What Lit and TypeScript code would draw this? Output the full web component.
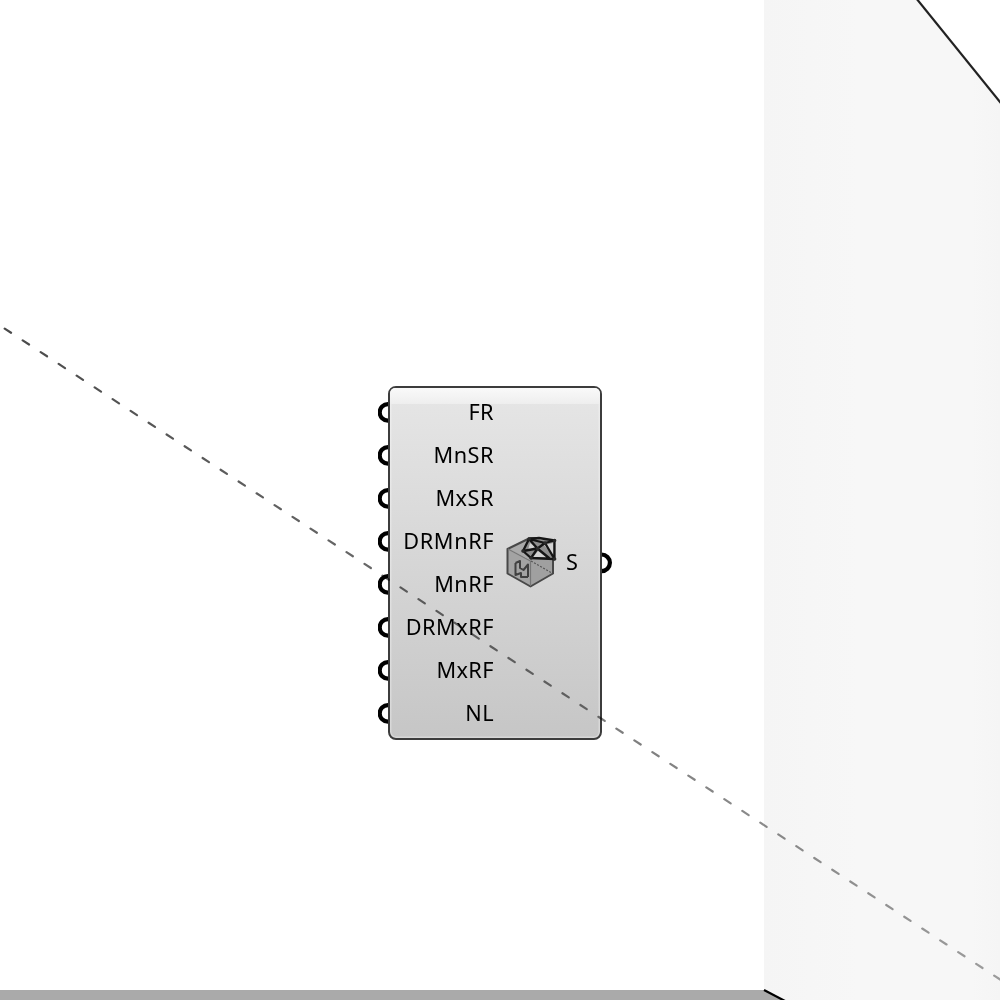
import { LitElement, html, css, svg } from "lit";
import { customElement } from "lit/decorators.js";

interface Port {
  label: string;
  spacing: number;
}

const INPUTS: Port[] = [
  { label: "FR", spacing: 0.3 },
  { label: "MnSR", spacing: 0.5 },
  { label: "MxSR", spacing: 0.5 },
  { label: "DRMnRF", spacing: 0.6 },
  { label: "MnRF", spacing: 0.5 },
  { label: "DRMxRF", spacing: 0.5 },
  { label: "MxRF", spacing: 0.4 },
  { label: "NL", spacing: 0.3 },
];

/** Mesh edges drawn over the top corner of the cube. */
const MESH = svg`
  <path d="M529 539L554.5 540.5V559L531 558L523 551Z" fill="#8f8f8f" stroke="none"/>
  <path d="M544 545L553 543V556Z M530 543L535 547L528 550Z M538 551L546 557L533 557Z" fill="#d2d2d2" stroke="none"/>
  <path d="M529 539L539 538L554.5 540.5V559L531 558L523 551ZM529 539L537.5 548.5M523 551L529 539M523 551L537.5 548.5L545 543L554.5 540.5M537.5 548.5L531 558M529 539L545 543L554.5 559M537.5 548.5L549 558"/>
  <path d="M529 539H529.1M554.5 540.5H554.6M554.5 559H554.6M531 558H531.1M523 551H523.1M537.5 548.5H537.6M545 543H545.1" stroke-width="3.6" stroke="#2a2a2a"/>`;

@customElement("app-root")
export class AppRoot extends LitElement {
  static styles = css`
    :host {
      display: block;
      position: relative;
      width: 1000px;
      height: 1000px;
      overflow: hidden;
      background: #fff;
    }
    .scene {
      position: absolute;
      inset: 0;
      display: block;
    }
    .overlay {
      mix-blend-mode: multiply;
    }
    .node {
      position: absolute;
      left: 378px;
      top: 386px;
      width: 234px;
      height: 354px;
    }
    .grips {
      position: absolute;
      inset: 0;
      display: block;
    }
    .card {
      position: absolute;
      left: 10px;
      top: 0;
      width: 214px;
      height: 354px;
      box-sizing: border-box;
      border: 2px solid #3c3c3c;
      border-radius: 8px;
      background: linear-gradient(#e6e6e6, #c6c6c6);
      box-shadow: inset 0 0 0 1.5px rgba(255, 255, 255, 0.3);
      display: grid;
      grid-template-columns: 103.5px 1fr 37.5px;
      align-items: center;
      font: 21.7px/43px "Noto Sans", "Open Sans", sans-serif;
      color: #000;
    }
    .card::before {
      content: "";
      position: absolute;
      left: 0;
      right: 0;
      top: 0;
      height: 16px;
      border-radius: 5px 5px 0 0;
      background: linear-gradient(#f9f9f9, #eeeeee);
    }
    .inputs {
      position: relative;
      display: flex;
      flex-direction: column;
      align-items: flex-end;
      white-space: nowrap;
      padding-bottom: 2px;
    }
    .input {
      height: 43px;
    }
    .icon {
      display: block;
      margin-left: 11.5px;
      filter: blur(0.45px);
    }
    .output {
      padding: 0 0 3px 3.5px;
    }
  `;

  render() {
    return html`
      <svg class="scene" width="1000" height="1000" viewBox="0 0 1000 1000">
        <defs>
          <linearGradient id="wall" x1="764" x2="1000" y1="0" y2="0" gradientUnits="userSpaceOnUse">
            <stop offset="0" stop-color="#f5f5f5" />
            <stop offset=".4" stop-color="#f7f7f7" />
            <stop offset=".88" stop-color="#f7f7f7" />
            <stop offset="1" stop-color="#f5f5f5" />
          </linearGradient>
        </defs>
        <path d="M764 0H917L1000 102V1000H784L764 990Z" fill="url(#wall)" />
        <path d="M0 990H764L784 1000H0Z" fill="#aaa" />
        <path d="M764 990L786 1001.5" stroke="#000" stroke-width="2.2" />
        <path d="M916 -2L1002 104.5" stroke="#222" stroke-width="2.2" />
      </svg>
      <div class="node">
        <svg class="grips" width="234" height="354" fill="#fff" stroke="#000" stroke-width="4.2">
          ${INPUTS.map((_, i) => svg`<circle cx="10" cy=${26.4 + i * 43} r="8.3" />`)}
          <circle cx="223.6" cy="176.8" r="8.3" />
        </svg>
        <div class="card">
          <div class="inputs">
            ${INPUTS.map(
              (p) => html`<div class="input" style="letter-spacing:${p.spacing}px;margin-right:${-p.spacing}px">${p.label}</div>`
            )}
          </div>
          <svg class="icon" width="54" height="54" viewBox="505 536 54 54" fill="none">
            <path d="M530 538L507.5 549L530.5 560L553.5 549Z" fill="#aaa" />
            <path d="M507.5 549L530.5 560V586.5L507.5 574Z" fill="#a3a3a3" />
            <path d="M553.5 549L530.5 560V586.5L553 574Z" fill="#a0a0a0" />
            <path
              d="M530 538L507.5 549V573.5L530.5 586.5L553 573.5V558M530 538L538 538"
              stroke="#484848"
              stroke-width="2"
              stroke-linejoin="round"
            />
            <path d="M508 549L530.5 561V586" stroke="#777" stroke-width="1.2" />
            <path d="M531 561L552 573" stroke="#555" stroke-width="1.2" stroke-dasharray="2 1.5" />
            <path
              d="M515.5 563L520 561V568L523.5 570L528 564.5V577M515.5 563V575L521 573V577L528 577"
              stroke="#404040"
              stroke-width="2"
              stroke-linejoin="round"
            />
            <g stroke="#151515" stroke-width="2.3" stroke-linejoin="round" stroke-linecap="round">${MESH}</g>
          </svg>
          <div class="output">S</div>
        </div>
      </div>
      <svg class="scene overlay" width="1000" height="1000" viewBox="0 0 1000 1000">
        <defs>
          <linearGradient id="fade" x1="0" x2="1000" y1="328" y2="980" gradientUnits="userSpaceOnUse">
            <stop offset="0" stop-color="#4a4a4a" />
            <stop offset=".5" stop-color="#727272" />
            <stop offset="1" stop-color="#a2a2a2" />
          </linearGradient>
        </defs>
        <path
          d="M4.7 328.6L1013 987.9"
          stroke="url(#fade)"
          stroke-width="2.2"
          stroke-linecap="round"
          stroke-dasharray="7.6 13.895"
        />
      </svg>
    `;
  }
}
